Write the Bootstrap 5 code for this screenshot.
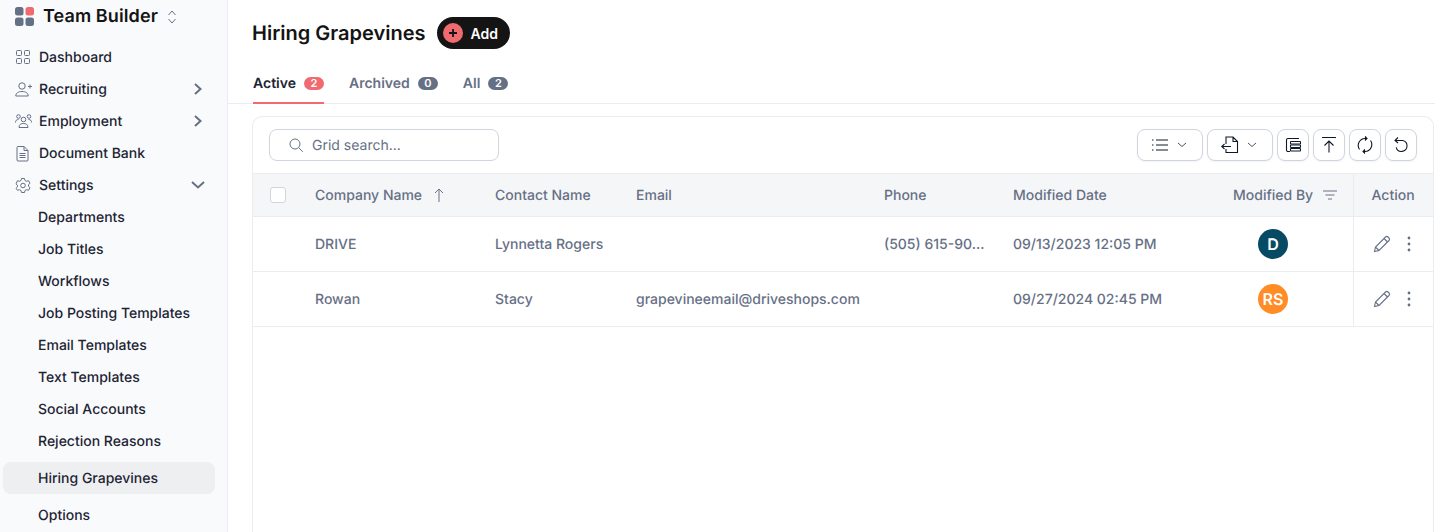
<!DOCTYPE html>
<html lang="en">
<head>
    <meta charset="UTF-8">
    <meta name="viewport" content="width=device-width, initial-scale=1.0">
    <title>Hiring Grapevines</title>
    <link href="https://cdn.jsdelivr.net/npm/bootstrap@5.3.3/dist/css/bootstrap.min.css" rel="stylesheet">
    <script src="https://cdn.jsdelivr.net/npm/bootstrap@5.3.3/dist/js/bootstrap.bundle.min.js"></script>
    <style>
        html, body { height: 532px; overflow: hidden; }
        body { font-family: Inter, "Liberation Sans", sans-serif; font-size: 14px; color: #101828; background: #fff; text-rendering: geometricPrecision; }
        .shell { height: 532px; }
        .side { width: 228px; flex: none; background: #f9fafc; border-right: 1px solid #eaecf0; overflow: hidden; }
        .brand { height: 33px; padding-left: 15px; margin-bottom: 8px; }
        .brand-name { font-size: 18px; font-weight: 600; color: #141414; margin-left: 9px; letter-spacing: .1px; }
        .side-link { height: 32px; color: #1d2433; font-weight: 500; font-size: 14px; padding-left: 15px; padding-right: 23px; }
        .side-link svg.ico { width: 17px; height: 17px; margin-right: 7px; flex: none; }
        .side-sub { height: 32px; color: #1d2433; font-weight: 500; font-size: 14px; padding-left: 38px; }
        .side-sub.current { background: #eeeff1; border-radius: 8px; margin: 5px 12px 5px 3px; padding-left: 35px; }
        .main-area { min-width: 0; }
        .page-title { font-size: 20px; font-weight: 600; color: #141414; margin: 1px 0 0; }
        .btn-add { background: #141414; color: #fff; border-radius: 16px; height: 32px; width: 73px; font-weight: 600; font-size: 14px; padding: 0 0 0 6px; margin-left: 12px; }
        .add-dot { width: 20px; height: 20px; border-radius: 50%; background: #ef6b6f; margin-right: 7px; }
        .page-head { padding: 17px 0 0 24px; height: 50px; }
        .tab-row { height: 54px; border-bottom: 1px solid #eaecf0; padding-left: 25px; gap: 25px; }
        .tab-item { height: 38px; color: #667085; font-weight: 600; font-size: 14px; padding-top: 7px; margin-top: 16px; }
        .tab-item.current { color: #1d2433; border-bottom: 2px solid #ef6b6f; }
        .count-pill { background: #667085; color: #fff; font-size: 11px; font-weight: 600; border-radius: 8px; width: 20px; height: 13px; margin-left: 8px; line-height: 13px; text-align: center; margin-top: 4px; }
        .current .count-pill { background: #ef6b6f; }
        .grid-box { margin: 12px 1px 0 24px; border: 1px solid #eaecf0; border-bottom: 0; border-radius: 10px 10px 0 0; height: 440px; overflow: hidden; }
        .grid-tools { height: 56px; padding: 0 16px; }
        .search-box { width: 230px; height: 32px; border: 1px solid #d0d5dd; border-radius: 8px; color: #667085; padding-left: 18px; }
        .search-box svg { margin-right: 8px; }
        .tool-btn { height: 32px; width: 32px; border: 1px solid #d0d5dd; border-radius: 8px; background: #fff; box-shadow: 0 1px 2px rgba(16,24,40,.05); padding: 0; color: #1d2433; }
        .tool-btn.wide { width: 66px; gap: 8px; padding-right: 3px; }
        .grid-table { table-layout: fixed; width: 1180px; margin: 0; border-collapse: collapse; }
        .grid-table th { background: #f5f6f8; height: 43px; color: #667085; font-weight: 500; font-size: 14px; padding: 0 0 0 16px; border-top: 1px solid #eaecf0; border-bottom: 1px solid #eaecf0; vertical-align: middle; white-space: nowrap; }
        .grid-table td { height: 55px; color: #667085; font-weight: 500; font-size: 14px; padding: 0 0 0 16px; border-bottom: 1px solid #eaecf0; vertical-align: middle; white-space: nowrap; overflow: hidden; }
        .grid-table .act { border-left: 1px solid #eaecf0; padding-left: 18px; }
        .row-actions { gap: 15px; }
        .tick { width: 16px; height: 16px; border: 1px solid #d0d5dd; border-radius: 3px; background: #fff; margin-left: 1px; }
        .initials { width: 30px; height: 30px; border-radius: 50%; color: #fff; font-weight: 600; font-size: 16px; margin-left: 25px; }
        .bg-teal { background: #064b63; }
        .bg-amber { background: #ff8c24; }
    </style>
</head>
<body>
    <div class="shell d-flex">
        <!-- sidebar -->
        <aside class="side d-flex flex-column">
            <div class="brand d-flex align-items-center">
                <svg width="19" height="19" viewBox="0 0 19 19"><rect x="0" y="0" width="8.5" height="8.5" rx="2.5" fill="#667085"/><rect x="10.5" y="0" width="8.5" height="8.5" rx="2.5" fill="#ef6b6f"/><rect x="0" y="10.5" width="8.5" height="8.5" rx="2.5" fill="#667085"/><rect x="10.5" y="10.5" width="8.5" height="8.5" rx="2.5" fill="#667085"/></svg>
                <span class="brand-name">Team Builder</span>
                <svg class="ms-2" width="12" height="16" viewBox="0 0 12 16" fill="none" stroke="#667085" stroke-width="1"><path d="M2.5 6 6 2l3.500 4M2.500 10 6 14l3.500-4"/></svg>
            </div>
            <a class="side-link d-flex align-items-center text-decoration-none" href="#">
                <svg class="ico" viewBox="0 0 17 17" fill="none" stroke="#667085" stroke-width="1"><rect x="1.500" y="1.500" width="5" height="5" rx="1"/><rect x="9.500" y="1.500" width="5" height="5" rx="1"/><rect x="1.500" y="9.500" width="5" height="5" rx="1"/><rect x="9.500" y="9.500" width="5" height="5" rx="1"/></svg>
                Dashboard
            </a>
            <a class="side-link d-flex align-items-center text-decoration-none" href="#">
                <svg class="ico" viewBox="0 0 17 17" fill="none" stroke="#667085" stroke-width="1"><circle cx="7" cy="5" r="3.200"/><path d="M.8 15c0-3 2.500-4.500 6.200-4.500s6.200 1.500 6.200 4.500zM13 5.500h4M15 3.500v4"/></svg>
                Recruiting
                <svg class="ms-auto" width="12" height="14" viewBox="0 0 12 14" fill="none" stroke="#667085" stroke-width="2"><path d="m3 2 5.500 5L3 12"/></svg>
            </a>
            <a class="side-link d-flex align-items-center text-decoration-none" href="#">
                <svg class="ico" viewBox="0 0 17 17" fill="none" stroke="#667085" stroke-width="1"><circle cx="8.500" cy="6.500" r="2.300"/><circle cx="3.500" cy="3.500" r="1.800"/><circle cx="14" cy="3.500" r="1.800"/><path d="M4 14.500c0-3 2-4 4.500-4s4.500 1 4.500 4zM.5 9.500c0-2 1-3 3-3M16.500 9.500c0-2-1-3-3-3"/></svg>
                Employment
                <svg class="ms-auto" width="12" height="14" viewBox="0 0 12 14" fill="none" stroke="#667085" stroke-width="2"><path d="m3 2 5.500 5L3 12"/></svg>
            </a>
            <a class="side-link d-flex align-items-center text-decoration-none" href="#">
                <svg class="ico" viewBox="0 0 17 17" fill="none" stroke="#667085" stroke-width="1"><path d="M2 2.500a1 1 0 0 1 1-1h6l4 4v9.500a1 1 0 0 1-1 1H3a1 1 0 0 1-1-1zM9 1.500v4h4M4.500 8.500h6M4.500 10.500h6M4.500 12.500h6"/></svg>
                Document Bank
            </a>
            <a class="side-link d-flex align-items-center text-decoration-none" href="#">
                <svg class="ico" viewBox="0 0 17 17" fill="none" stroke="#667085" stroke-width="1"><circle cx="8" cy="8.500" r="2.300"/><path d="M6.500 1.500h3l.5 2 1.500.8 2-.6 1.500 2.600-1.500 1.400v1.600l1.500 1.400-1.500 2.600-2-.6-1.500.8-.5 2h-3l-.5-2-1.500-.8-2 .6L1 11.300l1.500-1.400V8.300L1 6.900l1.500-3.200 2 .6 1.500-.8z"/></svg>
                Settings
                <svg class="ms-auto" width="16" height="12" viewBox="0 0 16 12" fill="none" stroke="#667085" stroke-width="2" style="margin-right:-2px"><path d="m2 3 6 5.500L14 3"/></svg>
            </a>
            <a class="side-sub d-flex align-items-center text-decoration-none" href="#">Departments</a>
            <a class="side-sub d-flex align-items-center text-decoration-none" href="#">Job Titles</a>
            <a class="side-sub d-flex align-items-center text-decoration-none" href="#">Workflows</a>
            <a class="side-sub d-flex align-items-center text-decoration-none" href="#">Job Posting Templates</a>
            <a class="side-sub d-flex align-items-center text-decoration-none" href="#">Email Templates</a>
            <a class="side-sub d-flex align-items-center text-decoration-none" href="#">Text Templates</a>
            <a class="side-sub d-flex align-items-center text-decoration-none" href="#">Social Accounts</a>
            <a class="side-sub d-flex align-items-center text-decoration-none" href="#">Rejection Reasons</a>
            <a class="side-sub current d-flex align-items-center flex-shrink-0 text-decoration-none" href="#">Hiring Grapevines</a>
            <a class="side-sub d-flex align-items-center flex-shrink-0 text-decoration-none" href="#">Options</a>
        </aside>

        <!-- main -->
        <main class="main-area flex-grow-1">
            <div class="page-head d-flex align-items-start">
                <h1 class="page-title lh-base">Hiring Grapevines</h1>
                <button class="btn btn-add d-flex align-items-center border-0" type="button">
                    <span class="add-dot d-flex align-items-center justify-content-center">
                        <svg width="10" height="10" viewBox="0 0 10 10" fill="none" stroke="#141414" stroke-width="1.800"><path d="M5 1v8M1 5h8"/></svg>
                    </span>
                    Add
                </button>
            </div>
            <div class="tab-row d-flex">
                <div class="tab-item current d-flex">Active <span class="count-pill">2</span></div>
                <div class="tab-item d-flex">Archived <span class="count-pill">0</span></div>
                <div class="tab-item d-flex">All <span class="count-pill">2</span></div>
            </div>
            <div class="grid-box">
                <div class="grid-tools d-flex align-items-center justify-content-between">
                    <div class="search-box d-flex align-items-center">
                        <svg width="16" height="16" viewBox="0 0 16 16" fill="none" stroke="#667085" stroke-width="1"><circle cx="7" cy="7" r="5"/><path d="m10.800 10.800 4 4"/></svg>
                        Grid search...
                    </div>
                    <div class="d-flex gap-1">
                        <button class="tool-btn wide d-flex align-items-center justify-content-center" type="button">
                            <svg width="18" height="14" viewBox="0 0 18 14" fill="none" stroke="#101828" stroke-width="1"><path d="M5 2h12M5 7h12M5 12h12M1 2h1.500M1 7h1.500M1 12h1.500"/></svg>
                            <svg width="10" height="6" viewBox="0 0 10 6" fill="none" stroke="#475467" stroke-width="1"><path d="m1 1 4 3.500L9 1"/></svg>
                        </button>
                        <button class="tool-btn wide d-flex align-items-center justify-content-center" type="button">
                            <svg width="18" height="18" viewBox="0 0 18 18" fill="none" stroke="#101828" stroke-width="1.100"><path d="M5 8V1h7l4.500 4.500V16.500H5V13M12 1v4.500h4.500M10 10.500H.8M3.500 8 .8 10.500 3.500 13"/></svg>
                            <svg width="10" height="6" viewBox="0 0 10 6" fill="none" stroke="#475467" stroke-width="1"><path d="m1 1 4 3.500L9 1"/></svg>
                        </button>
                        <button class="tool-btn d-flex align-items-center justify-content-center" type="button">
                            <svg width="18" height="18" viewBox="0 0 18 18" fill="none" stroke="#101828" stroke-width="1.100"><path d="M15 2.500H4a1.500 1.500 0 0 0-1.500 1.500v10A1.500 1.500 0 0 0 4 15.500h2"/><rect x="6.500" y="5.500" width="10" height="2.500" rx=".6"/><rect x="6.500" y="9" width="10" height="2.500" rx=".6"/><rect x="6.500" y="12.500" width="10" height="2.500" rx=".6"/></svg>
                        </button>
                        <button class="tool-btn d-flex align-items-center justify-content-center" type="button">
                            <svg width="16" height="18" viewBox="0 0 16 18" fill="none" stroke="#101828" stroke-width="1.100"><path d="M1 1.500h14M8 16.500V5M3.500 9.500 8 5l4.500 4.500"/></svg>
                        </button>
                        <button class="tool-btn d-flex align-items-center justify-content-center" type="button">
                            <svg width="18" height="20" viewBox="0 0 18 20" fill="none" stroke="#101828" stroke-width="1.100"><path d="M3.500 14.500A7 7 0 0 1 9 3.500h1.500M14.500 5.500A7 7 0 0 1 9 16.500H7.500"/><path d="M9.500 2 11 3.500 9.500 5zM8.500 15 7 16.500 8.500 18z" fill="#101828"/></svg>
                        </button>
                        <button class="tool-btn d-flex align-items-center justify-content-center" type="button">
                            <svg width="18" height="18" viewBox="0 0 18 18" fill="none" stroke="#101828" stroke-width="1.100"><path d="M3 4.500h7.500a5.500 5.500 0 1 1-6.300 6.800M6 1.500l-3 3 3 2.500"/></svg>
                        </button>
                    </div>
                </div>
                <table class="grid-table">
                    <colgroup>
                        <col style="width:46px"><col style="width:180px"><col style="width:141px"><col style="width:248px"><col style="width:129px"><col style="width:220px"><col style="width:136px"><col style="width:80px">
                    </colgroup>
                    <thead>
                        <tr>
                            <th><div class="tick"></div></th>
                            <th><span class="d-flex align-items-center">Company Name
                                <svg width="14" height="16" viewBox="0 0 14 16" fill="none" stroke="#667085" stroke-width="1" style="margin-left:10px"><path d="M7 15V2M3 6l4-4 4 4"/></svg></span></th>
                            <th>Contact Name</th>
                            <th>Email</th>
                            <th>Phone</th>
                            <th>Modified Date</th>
                            <th><span class="d-flex align-items-center">Modified By
                                <svg width="16" height="12" viewBox="0 0 16 12" fill="none" stroke="#667085" stroke-width="1" style="margin-left:9px"><path d="M1 2h14M3.500 6h9M6 10h4"/></svg></span></th>
                            <th class="act">Action</th>
                        </tr>
                    </thead>
                    <tbody>
                        <tr>
                            <td></td>
                            <td>DRIVE</td>
                            <td>Lynnetta Rogers</td>
                            <td></td>
                            <td>(505) 615-90...</td>
                            <td>09/13/2023 12:05 PM</td>
                            <td><div class="initials bg-teal d-flex align-items-center justify-content-center">D</div></td>
                            <td class="act">
                                <div class="row-actions d-flex align-items-center">
                                    <svg width="20" height="20" viewBox="0 0 20 20" fill="none" stroke="#667085" stroke-width="1.100"><path d="m2.500 17.500 1-4.500L13.500 3a1.800 1.800 0 0 1 2.500 0l1 1a1.800 1.800 0 0 1 0 2.500L7 16.500zM3.500 13l3.500 3.500M12 4.500l3.500 3.500"/></svg>
                                    <svg width="4" height="16" viewBox="0 0 4 16" fill="#667085"><circle cx="2" cy="2" r="1.400"/><circle cx="2" cy="8" r="1.400"/><circle cx="2" cy="14" r="1.400"/></svg>
                                </div>
                            </td>
                        </tr>
                        <tr>
                            <td></td>
                            <td>Rowan</td>
                            <td>Stacy</td>
                            <td>grapevineemail@driveshops.com</td>
                            <td></td>
                            <td>09/27/2024 02:45 PM</td>
                            <td><div class="initials bg-amber d-flex align-items-center justify-content-center">RS</div></td>
                            <td class="act">
                                <div class="row-actions d-flex align-items-center">
                                    <svg width="20" height="20" viewBox="0 0 20 20" fill="none" stroke="#667085" stroke-width="1.100"><path d="m2.500 17.500 1-4.500L13.500 3a1.800 1.800 0 0 1 2.500 0l1 1a1.800 1.800 0 0 1 0 2.500L7 16.500zM3.500 13l3.500 3.500M12 4.500l3.500 3.500"/></svg>
                                    <svg width="4" height="16" viewBox="0 0 4 16" fill="#667085"><circle cx="2" cy="2" r="1.400"/><circle cx="2" cy="8" r="1.400"/><circle cx="2" cy="14" r="1.400"/></svg>
                                </div>
                            </td>
                        </tr>
                    </tbody>
                </table>
            </div>
        </main>
    </div>
</body>
</html>
